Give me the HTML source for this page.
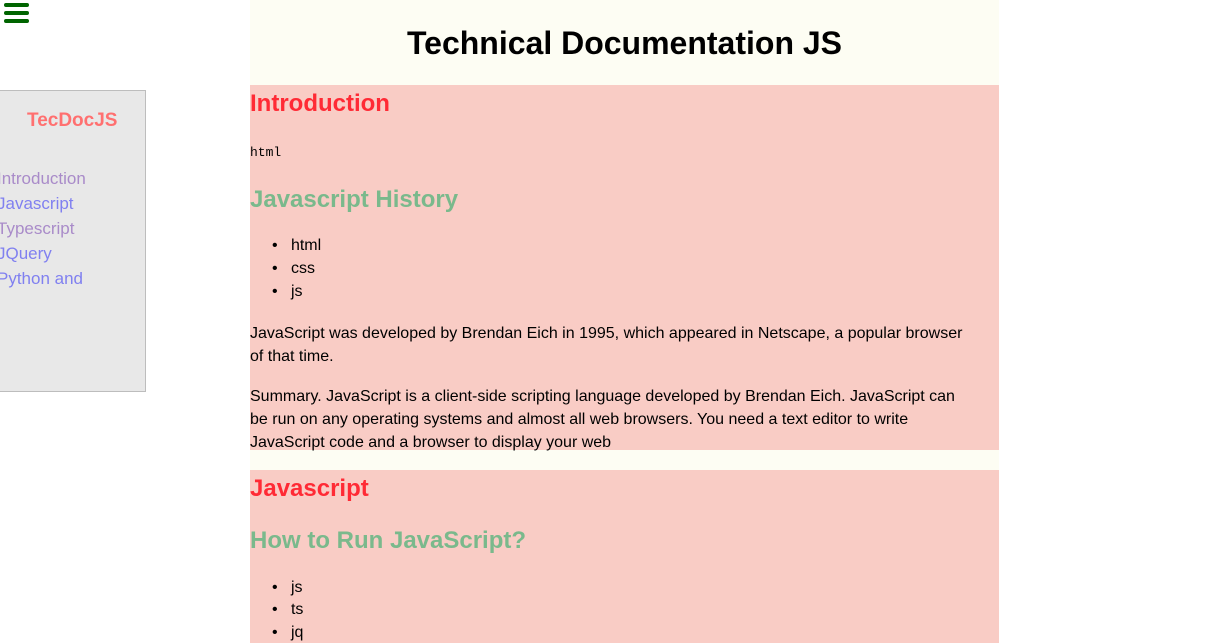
<!DOCTYPE html>
<html><head><meta charset="utf-8"><style>
body{margin:0;width:1213px;height:643px;overflow:hidden;background:#fff;font-family:"Comic Sans MS","Liberation Sans",sans-serif;position:relative}
.a{position:absolute;white-space:nowrap}
.menu{left:4px;width:25px;height:4px;background:#006400;border-radius:2px;position:absolute}
#nav{position:absolute;left:-1px;top:90px;width:145px;height:300px;background:#e8e8e8;border:1px solid #bdbdbd}
#nav .a{font-size:17px}
.v{color:#a98bc9}.b{color:#8080f0}
#main{position:absolute;left:250px;top:0;width:749px;height:643px;background:#fdfdf3}
.sec{position:absolute;left:0;width:749px;background:#f9ccc5}
h2{color:#ff2a35;font-size:24px;margin:0;font-weight:bold}
h3{color:#7ab98c;font-size:24px;margin:0;font-weight:bold}
.t{font-size:16px;color:#000}
</style></head><body>
<div class="menu" style="top:3px"></div><div class="menu" style="top:11px"></div><div class="menu" style="top:19px"></div>
<div id="nav">
<div class="a" style="left:27px;top:19px;color:#ff7070;font-size:19px;font-weight:bold">TecDocJS</div>
<div class="a v" style="left:-3px;top:78px">Introduction</div>
<div class="a b" style="left:-3px;top:103px">Javascript</div>
<div class="a v" style="left:-3px;top:128px">Typescript</div>
<div class="a b" style="left:-3px;top:153px">JQuery</div>
<div class="a b" style="left:-3px;top:178px">Python and</div>
</div>
<div id="main">
<div class="a" style="left:0;width:749px;text-align:center;top:25px;font-size:32px;font-weight:bold">Technical Documentation JS</div>
<div class="sec" style="top:85px;height:365px">
<h2 class="a" style="left:0;top:5px">Introduction</h2>
<div class="a" style="left:0;top:60px;font-family:'Liberation Mono',monospace;font-size:13px">html</div>
<h3 class="a" style="left:0;top:101px">Javascript History</h3>
<div class="a t" style="left:22px;top:152px">•&nbsp;&nbsp;&nbsp;html</div>
<div class="a t" style="left:22px;top:175px">•&nbsp;&nbsp;&nbsp;css</div>
<div class="a t" style="left:22px;top:198px">•&nbsp;&nbsp;&nbsp;js</div>
<div class="a t" style="left:0;top:237px;line-height:23px;white-space:normal;width:725px">JavaScript was developed by Brendan Eich in 1995, which appeared in Netscape, a popular browser of that time.</div>
<div class="a t" style="left:0;top:300px;line-height:23px;white-space:normal;width:725px">Summary. JavaScript is a client-side scripting language developed by Brendan Eich. JavaScript can be run on any operating systems and almost all web browsers. You need a text editor to write JavaScript code and a browser to display your web</div>
</div>
<div class="sec" style="top:470px;height:173px">
<h2 class="a" style="left:0;top:5px">Javascript</h2>
<h3 class="a" style="left:0;top:57px">How to Run JavaScript?</h3>
<div class="a t" style="left:22px;top:109px">•&nbsp;&nbsp;&nbsp;js</div>
<div class="a t" style="left:22px;top:131px">•&nbsp;&nbsp;&nbsp;ts</div>
<div class="a t" style="left:22px;top:154px">•&nbsp;&nbsp;&nbsp;jq</div>
</div>
</div>
</body></html>
